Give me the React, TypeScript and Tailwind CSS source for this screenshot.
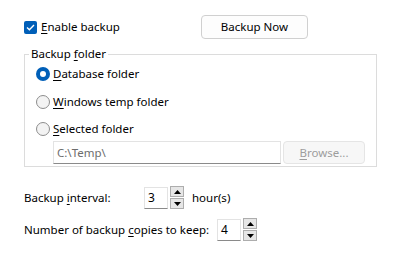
import React from "react";

const font = { fontFamily: '"Noto Sans", "Open Sans", sans-serif' };

function Key({ children }: { children: React.ReactNode }) {
  return <span className="underline underline-offset-[2px] decoration-1">{children}</span>;
}

function Radio({ checked }: { checked?: boolean }) {
  if (checked) {
    return (
      <span className="flex h-[14px] w-[14px] items-center justify-center rounded-full bg-[#005fb8]">
        <span className="h-[6px] w-[6px] rounded-full bg-white" />
      </span>
    );
  }
  return <span className="h-[14px] w-[14px] rounded-full border border-[#8d8d8d] bg-[#f3f3f3]" />;
}

function Spin({ value }: { value: string }) {
  return (
    <div className="flex items-center gap-[2px]">
      <div className="flex h-[22px] w-[24px] items-center border border-[#e3e3e3] border-b-[#8a8a8a] bg-white pl-[3px] text-[12px] text-black">
        {value}
      </div>
      <div className="flex flex-col gap-[1px]">
        <button className="flex h-[11px] w-[14px] items-center justify-center border border-[#adadad] bg-[#e6e6e6]">
          <svg width="7" height="4" viewBox="0 0 7 4">
            <path d="M0 4 L3.5 0 L7 4 Z" fill="#000" />
          </svg>
        </button>
        <button className="flex h-[11px] w-[14px] items-center justify-center border border-[#adadad] bg-[#e6e6e6]">
          <svg width="7" height="4" viewBox="0 0 7 4">
            <path d="M0 0 L7 0 L3.5 4 Z" fill="#000" />
          </svg>
        </button>
      </div>
    </div>
  );
}

export default function App() {
  return (
    <div className="h-[268px] w-[401px] whitespace-nowrap bg-white text-[11.5px] text-black" style={font}>
      <div className="flex items-center pl-[24px] pt-[15px]">
        <label className="flex w-[177px] items-center gap-[4px]">
          <span className="flex h-[13px] w-[13px] items-center justify-center rounded-[2px] bg-[#005fb8]">
            <svg width="9" height="7" viewBox="0 0 9 7">
              <path d="M1 3.5 L3.4 5.8 L8 1" fill="none" stroke="#fff" strokeWidth="1.4" />
            </svg>
          </span>
          <span>
            <Key>E</Key>nable backup
          </span>
        </label>
        <button className="h-[24px] w-[107px] rounded-[4px] border border-[#d0d0d0] bg-[#fdfdfd] text-black">
          Backup Now
        </button>
      </div>

      <fieldset className="ml-[24px] mt-[7px] h-[121px] w-[352px] border border-[#dcdcdc] px-[11px] pt-[2px]">
        <legend className="ml-[-7px] px-[2px] leading-[16px]">
          Backup <Key>f</Key>older
        </legend>
        <div className="flex h-[20px] items-center gap-[3px]">
          <Radio checked />
          <span>
            <Key>D</Key>atabase folder
          </span>
        </div>
        <div className="mt-[8px] flex h-[20px] items-center gap-[3px]">
          <Radio />
          <span>
            <Key>W</Key>indows temp folder
          </span>
        </div>
        <div className="mt-[7px] flex h-[20px] items-center gap-[3px]">
          <Radio />
          <span>
            <Key>S</Key>elected folder
          </span>
        </div>
        <div className="ml-[17px] mt-[2px] flex gap-[2px]">
          <div className="flex h-[23px] w-[228px] items-center border border-[#e3e3e3] border-b-[#8a8a8a] pl-[3px] text-[#6d6d6d]">
            C:\Temp\
          </div>
          <button className="h-[23px] w-[82px] rounded-[4px] border border-[#e5e5e5] bg-[#f7f7f7] text-[#9d9d9d]">
            <Key>B</Key>rowse...
          </button>
        </div>
      </fieldset>

      <div className="ml-[24px] mt-[19px] flex items-center">
        <span className="w-[120px]">
          Backup <Key>i</Key>nterval:
        </span>
        <Spin value="3" />
        <span className="ml-[8px]">hour(s)</span>
      </div>
      <div className="ml-[24px] mt-[9px] flex items-center">
        <span className="w-[193px]">
          Number of backup <Key>c</Key>opies to keep:
        </span>
        <Spin value="4" />
      </div>
    </div>
  );
}
